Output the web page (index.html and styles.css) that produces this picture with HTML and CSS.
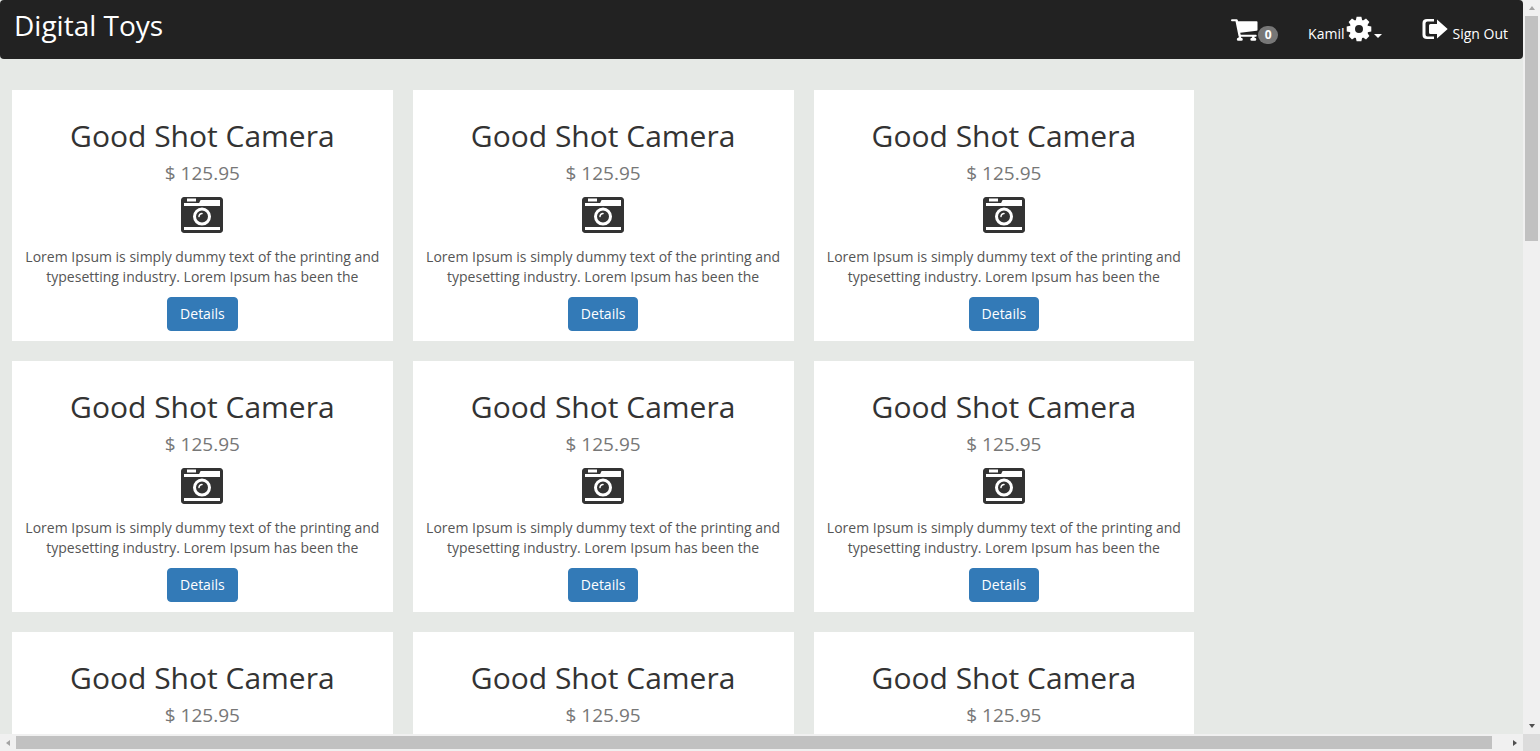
FILE: index.html
```
<!DOCTYPE html>
<html lang="en">
<head>
<meta charset="utf-8">
<title>Digital Toys</title>
<link rel="stylesheet" href="styles.css">
</head>
<body>
<svg class="sprite" aria-hidden="true">
  <symbol id="camera" viewBox="0 128 1792 1536"><path d="M928 832q0-14-9-23t-23-9q-66 0-113 47t-47 113q0 14 9 23t23 9 23-9 9-23q0-40 28-68t68-28q14 0 23-9t9-23zm224 130q0 106-75 181t-181 75-181-75-75-181 75-181 181-75 181 75 75 181zm-1024 574h1536v-128h-1536v128zm1152-574q0-159-112.500-271.500t-271.500-112.500-271.500 112.500-112.500 271.500 112.500 271.500 271.500 112.500 271.500-112.500 112.500-271.500zm-1024-642h384v-128h-384v128zm-128 192h1536v-256h-828l-64 128h-644v128zm1664-256v1280q0 53-37.500 90.500t-90.500 37.500h-1536q-53 0-90.500-37.500t-37.500-90.500v-1280q0-53 37.500-90.500t90.500-37.500h1536q53 0 90.500 37.500t37.500 90.500z"/></symbol>
  <symbol id="cart" viewBox="0 0 28 24"><path d="M2 1.200h4.700q.8 0 1 .8l.4 1.200h18.600q.8 0 .8.900v7.700q0 .8-.8 1L10.200 14.800l.5 1.900h15.100q.9 0 .9 1t-.9 1h-1.300v1h.3a1.500 1.500 0 0 1 0 3h-3a1.500 1.500 0 0 1 0-3h.3v-1H11v1h.3a1.500 1.500 0 0 1 0 3h-3a1.500 1.500 0 0 1 0-3h.3v-1h.9q-.8 0-1-.8L5.500 3.200H2a1 1 0 0 1 0-2z"/></symbol>
  <symbol id="cog" viewBox="-13 -13 26 26">
    <path fill-rule="evenodd" d="M-9.500 0a9.500 9.500 0 1 0 19 0a9.500 9.500 0 1 0-19 0zM-4 0a4 4 0 1 1 8 0a4 4 0 1 1-8 0z"/>
    <g id="teeth"><path id="tooth" d="M-3.200-8.500L-2.400-12.300h4.800L3.200-8.500zM-3.200 8.500L-2.400 12.300h4.800L3.200 8.500z"/><use href="#tooth" transform="rotate(45)"/><use href="#tooth" transform="rotate(90)"/><use href="#tooth" transform="rotate(135)"/></g>
  </symbol>
  <symbol id="exit" viewBox="0 0 26 22"><path d="M12 1H5Q.5 1 .5 5v12q0 4 4.500 4h7v-2.500H5.500Q3.500 18.500 3.500 16.500v-11Q3.500 3.500 5.500 3.500H12zM15 1.500V6H8.500Q7 6 7 7.500v7Q7 16 8.500 16H15v4.500L25.700 11z"/></symbol>
</svg>
<div class="window">
  <div class="view">
    <header class="navbar">
      <a class="brand" href="#">Digital Toys</a>
      <nav class="menu">
        <a class="item cart" href="#" aria-label="Cart"><svg class="icon cart-icon"><use href="#cart"/></svg><span class="badge">0</span></a>
        <button class="item account" type="button">Kamil<svg class="icon cog-icon"><use href="#cog"/></svg><span class="caret"></span></button>
        <a class="item" href="#"><svg class="icon exit-icon"><use href="#exit"/></svg>Sign Out</a>
      </nav>
    </header>
    <main class="products">
      <article class="card"><h2 class="name">Good Shot Camera</h2><p class="price">$ 125.95</p><svg class="photo"><use href="#camera"/></svg><p class="text">Lorem Ipsum is simply dummy text of the printing and typesetting industry. Lorem Ipsum has been the</p><button class="details" type="button">Details</button></article>
      <article class="card"><h2 class="name">Good Shot Camera</h2><p class="price">$ 125.95</p><svg class="photo"><use href="#camera"/></svg><p class="text">Lorem Ipsum is simply dummy text of the printing and typesetting industry. Lorem Ipsum has been the</p><button class="details" type="button">Details</button></article>
      <article class="card"><h2 class="name">Good Shot Camera</h2><p class="price">$ 125.95</p><svg class="photo"><use href="#camera"/></svg><p class="text">Lorem Ipsum is simply dummy text of the printing and typesetting industry. Lorem Ipsum has been the</p><button class="details" type="button">Details</button></article>
      <article class="card"><h2 class="name">Good Shot Camera</h2><p class="price">$ 125.95</p><svg class="photo"><use href="#camera"/></svg><p class="text">Lorem Ipsum is simply dummy text of the printing and typesetting industry. Lorem Ipsum has been the</p><button class="details" type="button">Details</button></article>
      <article class="card"><h2 class="name">Good Shot Camera</h2><p class="price">$ 125.95</p><svg class="photo"><use href="#camera"/></svg><p class="text">Lorem Ipsum is simply dummy text of the printing and typesetting industry. Lorem Ipsum has been the</p><button class="details" type="button">Details</button></article>
      <article class="card"><h2 class="name">Good Shot Camera</h2><p class="price">$ 125.95</p><svg class="photo"><use href="#camera"/></svg><p class="text">Lorem Ipsum is simply dummy text of the printing and typesetting industry. Lorem Ipsum has been the</p><button class="details" type="button">Details</button></article>
      <article class="card"><h2 class="name">Good Shot Camera</h2><p class="price">$ 125.95</p></article>
      <article class="card"><h2 class="name">Good Shot Camera</h2><p class="price">$ 125.95</p></article>
      <article class="card"><h2 class="name">Good Shot Camera</h2><p class="price">$ 125.95</p></article>
    </main>
  </div>
  <div class="bar vertical" aria-hidden="true">
    <span class="arrow up"></span><div class="track"><div class="thumb"></div></div><span class="arrow down"></span>
  </div>
  <div class="bar horizontal" aria-hidden="true">
    <span class="arrow left"></span><div class="track"><div class="thumb"></div></div><span class="arrow right"></span>
  </div>
  <div class="corner"></div>
</div>
</body>
</html>
```
FILE: styles.css
```
* { box-sizing: border-box; }
body {
  margin: 0;
  font-family: "Open Sans", sans-serif;
  font-size: 14px;
  line-height: 20px;
  color: #333;
  overflow: hidden;
}
.sprite { display: none; }
.window {
  display: grid;
  grid-template: minmax(0, 1fr) 17px / minmax(0, 1fr) 17px;
  height: 100vh;
}
.view { overflow: hidden; background: #e6e9e6; }

.navbar {
  display: flex;
  justify-content: space-between;
  height: 59px;
  padding: 0 15px 0 14px;
  background: #222;
  border-radius: 4px;
}
.brand {
  padding-top: 11px;
  color: #fff;
  font-size: 28px;
  line-height: 28px;
  text-decoration: none;
}
.menu { display: flex; align-items: flex-start; gap: 40px; padding-top: 16px; }
.item {
  display: flex;
  align-items: flex-end;
  gap: 4px;
  height: 28px;
  padding: 0;
  border: 0;
  background: none;
  color: #fff;
  font: inherit;
  text-decoration: none;
}
.icon { display: block; fill: currentColor; }
.cart { gap: 0; margin-right: -10px; }
.cart-icon { width: 28px; height: 24px; margin-bottom: 2px; }
.cog-icon { width: 26px; height: 26px; margin-bottom: 2px; }
.exit-icon { width: 26px; height: 22px; margin-bottom: 4px; }
.account { gap: 2px; }
.badge {
  width: 20px;
  height: 18px;
  border-radius: 10px;
  background: #777;
  font-size: 12px;
  font-weight: 700;
  line-height: 18px;
  text-align: center;
}
.caret {
  margin-bottom: 6px;
  border-top: 4px solid #fff;
  border-right: 4px solid transparent;
  border-left: 4px solid transparent;
}

.products {
  display: grid;
  grid-template-columns: repeat(3, calc(25% + 6px));
  gap: 20px;
  padding: 31px 12px;
}
.card {
  display: flex;
  flex-direction: column;
  align-items: center;
  min-height: 251px;
  padding: 29px 10px 10px;
  background: #fff;
  text-align: center;
}
.name { margin: 0; font-size: 30px; font-weight: 400; line-height: 33px; }
.price { margin: 11px 0 0; color: #777; font-size: 19px; font-weight: 400; line-height: 20px; }
.photo { width: 42px; height: 36px; margin-top: 14px; fill: #333; }
.text { margin: 14px 0 10px; color: #555; font-weight: 400; }
.details {
  padding: 6px 12px;
  border: 1px solid #337ab7;
  border-radius: 4px;
  background: #337ab7;
  color: #fff;
  font: inherit;
}

.bar { display: flex; align-items: center; background: #f0f0f0; }
.vertical { flex-direction: column; }
.horizontal { grid-row: 2; }
.track { flex: 1; }
.vertical .track { width: 13px; }
.horizontal .track { height: 13px; }
.thumb { background: #c1c1c1; }
.vertical .thumb { height: 32%; }
.horizontal .thumb { width: 99%; height: 100%; }
.arrow { display: flex; align-items: center; justify-content: center; width: 16px; height: 16px; }
.arrow::before { content: ""; border: 3px solid transparent; }
.up::before { border-top: 0; border-bottom: 4px solid #a3a3a3; }
.down::before { border-bottom: 0; border-top: 4px solid #505050; }
.left::before { border-left: 0; border-right: 4px solid #a3a3a3; }
.right::before { border-right: 0; border-left: 4px solid #505050; }
.corner { grid-area: 2 / 2; background: #dcdcdc; }
```
